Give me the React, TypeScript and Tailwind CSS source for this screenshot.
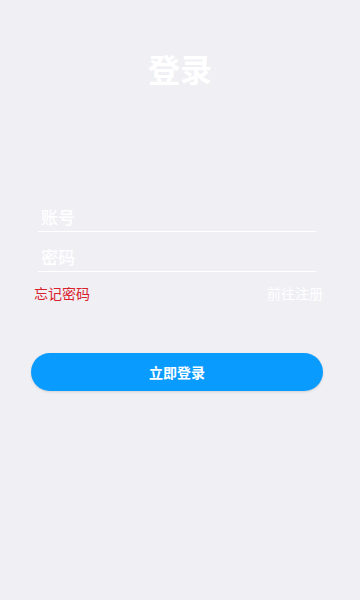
import React, { useState } from 'react';

const App = () => {
  const [account, setAccount] = useState('');
  const [password, setPassword] = useState('');

  return (
    <div
      className="min-h-[600px] w-full bg-[#efeff4] flex flex-col"
      style={{ fontFamily: '"Noto Sans CJK SC", "Noto Sans", sans-serif' }}
    >
      <h1 className="mt-[52px] text-center text-[32px] leading-[32px] font-bold text-white">登录</h1>

      <div className="mt-[108px] ml-[38px] w-[278px] flex flex-col">
        <div className="h-[40px] border-b border-white flex items-end pb-[5px]">
          <input
            value={account}
            onChange={(e) => setAccount(e.target.value)}
            placeholder="账号"
            className="w-full h-[18px] pl-[3px] bg-transparent outline-none text-[17px] leading-[18px] font-medium text-gray-700 placeholder:text-white"
          />
        </div>
        <div className="h-[40px] border-b border-white flex items-end pb-[5px]">
          <input
            type="password"
            value={password}
            onChange={(e) => setPassword(e.target.value)}
            placeholder="密码"
            className="w-full h-[18px] pl-[3px] bg-transparent outline-none text-[17px] leading-[18px] font-medium text-gray-700 placeholder:text-white"
          />
        </div>
      </div>

      <div className="mt-[11px] ml-[34px] w-[289px] h-[20px] flex items-center justify-between text-[14px] leading-[20px]">
        <span className="text-[#d9212c]">忘记密码</span>
        <span className="text-white">前往注册</span>
      </div>

      <button className="mt-[50px] ml-[31px] w-[292px] h-[38px] rounded-full bg-[#0a9bff] shadow-sm text-white text-[14px] font-bold">
        立即登录
      </button>
    </div>
  );
};

export default App;
